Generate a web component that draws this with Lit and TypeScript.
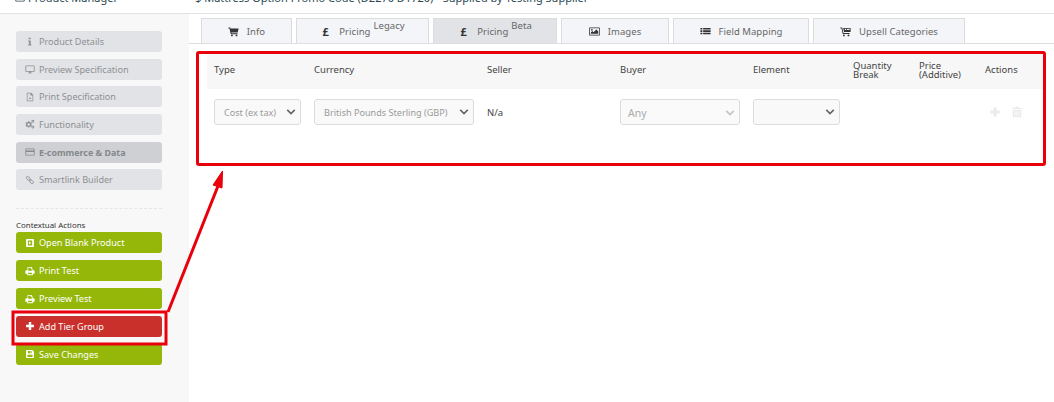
import { LitElement, html, css, svg } from "lit";
import { customElement } from "lit/decorators.js";

const ICONS: Record<string, any> = {
  info: svg`<path d="M5 1h3v2.2H5zM4.500 5H8v5.400h1V12H4.500v-1.600h1V6.600h-1z"/>`,
  monitor: svg`<path fill-rule="evenodd" d="M1.500 2h11a1 1 0 0 1 1 1v7a1 1 0 0 1-1 1H8.300v1.200H10V13H4v-.8h1.700V11H1.500a1 1 0 0 1-1-1V3a1 1 0 0 1 1-1zM1.700 3.200v6.600h10.600V3.200z"/>`,
  pdf: svg`<path fill-rule="evenodd" d="M2.500 1H8.500L11.500 4V13H2.500zM3.500 2V12H10.500V5H7.500V2zM5 10.500C6 9.500 7 7.500 6.700 6.200 7.300 7.700 8 8.700 9.300 9.300 7.800 9.200 6.500 9.600 5 10.500z"/>`,
  cogs: svg`<path fill-rule="evenodd" d="M4.200 3.200h2l.3 1.100 1.100.6 1-.4 1 1.700-.8.800v1.200l.8.800-1 1.700-1-.4-1.100.6-.3 1.100h-2L3.900 11l-1.100-.6-1 .4-1-1.700.8-.8V7.100l-.8-.8 1-1.700 1 .4 1.100-.6zM5.200 6a1.700 1.700 0 1 0 0 3.400 1.700 1.700 0 0 0 0-3.400zM11 1l.8.500.7-.2.500.8-.4.600v.9l.4.600-.5.8-.7-.2-.8.500-.8-.5-.7.200-.5-.8.400-.6V2.700l-.4-.6.500-.8.700.2zM11 2.300a.8.800 0 1 0 0 1.600.8.800 0 0 0 0-1.600zM11 9l.8.500.7-.2.500.8-.4.600v.9l.4.600-.5.8-.7-.2-.8.500-.8-.5-.7.200-.5-.8.400-.6v-.9l-.4-.6.500-.8.700.2zM11 10.300a.8.800 0 1 0 0 1.600.8.800 0 0 0 0-1.600z"/>`,
  card: svg`<path fill-rule="evenodd" d="M1.500 2h11a1 1 0 0 1 1 1v8a1 1 0 0 1-1 1h-11a1 1 0 0 1-1-1V3a1 1 0 0 1 1-1zM1.700 3.200V4.800h10.600V3.200zM1.700 7v3.800h10.600V7z"/>`,
  link: svg`<path fill="none" stroke="currentColor" stroke-width="1.400" d="M2 3.200a1.800 1.800 0 0 1 3-.6l2 2a1.800 1.800 0 0 1-2.500 2.500L2.500 5.100A1.800 1.800 0 0 1 2 3.200zM7 7.300a1.800 1.800 0 0 1 2.500 0l2 2a1.800 1.800 0 0 1-2.500 2.500l-2-2a1.800 1.800 0 0 1 0-2.500z"/>`,
  play: svg`<path fill-rule="evenodd" d="M2.500 1.500h9a1 1 0 0 1 1 1v9a1 1 0 0 1-1 1h-9a1 1 0 0 1-1-1v-9a1 1 0 0 1 1-1zM4 3.500v7h6v-7zM5.500 4.800 9 7 5.500 9.200z"/>`,
  print: svg`<path fill-rule="evenodd" d="M3.500 1.500h5.500l1.500 1.500V6H12a1.500 1.500 0 0 1 1.500 1.500V11h-2.500v1.800H3V11H.5V7.500A1.500 1.500 0 0 1 2 6h1.500zM4.500 2.500V6.500h5V4H8V2.500zM4.300 9.500v2.200h5.400V9.500z"/>`,
  plus: svg`<path d="M5.300 1.500h3.400v3.800h3.800v3.400H8.700v3.800H5.300V8.700H1.500V5.300h3.800z"/>`,
  save: svg`<path fill-rule="evenodd" d="M2 1.500h8.500l2 2V12a.5.500 0 0 1-.5.500H2a.5.500 0 0 1-.5-.5V2a.5.500 0 0 1 .5-.5zM4 2.700v3.300h5.500V2.700zM3.500 8v3.300h7V8zM7.500 3.200h1.200v2.200H7.500z"/>`,
  cart: svg`<path d="M.5 2h2.300l.3 1.200h10.400l-1.200 5H4.300l.2 1h7.700v1.200H3.500L1.900 3.200H.5z"/><circle cx="5" cy="12" r="1.200"/><circle cx="10.800" cy="12" r="1.200"/>`,
  upsell: svg`<path d="M.5 2h2.300l1.700 7h7.700v1.200H3.500L1.900 3.200H.5z"/><circle cx="5" cy="12" r="1.200"/><circle cx="10.800" cy="12" r="1.200"/><path fill-rule="evenodd" d="M4 2.500h9.500v5H5.200zM6 3.500l.3 1.500H8V3.500zM9 3.500V5h3.300V3.500z"/>`,
  image: svg`<path fill-rule="evenodd" d="M1 2h12a.7.700 0 0 1 .7.700v8.600a.7.700 0 0 1-.7.700H1a.7.700 0 0 1-.7-.7V2.700A.7.700 0 0 1 1 2zM1.300 3v8h11.400V3zM2.300 10V8.300l2-2 1.500 1.500 3.500-3.500 2.400 2.400V10zM3.700 3.800a1.100 1.100 0 1 1 0 2.200 1.100 1.100 0 0 1 0-2.200z"/>`,
  list: svg`<path d="M.5 2.500h2.500v2H.5zM4 2.500h9.500v2H4zM.5 5.500h2.500v2H.5zM4 5.500h9.500v2H4zM.5 8.500h2.500v2H.5zM4 8.500h9.500v2H4z"/>`,
  trash: svg`<path fill-rule="evenodd" d="M5 1h4l.7 1.300H13v1.200H1V2.300h3.300zM2 4.500h10V13H2zM4 6v5.500h1V6zM6.500 6v5.500h1V6zM9 6v5.500h1V6z"/>`,
};

const icon = (name: string) =>
  html`<svg class="ico" viewBox="0 0 14 14" fill="currentColor" aria-hidden="true">${ICONS[name]}</svg>`;

const chevron = html`<svg class="chev" viewBox="0 0 12 8" aria-hidden="true"><path d="M1.500 1.500 6 6l4.500-4.500" fill="none" stroke="currentColor" stroke-width="2"/></svg>`;

const NAV = [
  ["info", "Product Details"],
  ["monitor", "Preview Specification"],
  ["pdf", "Print Specification"],
  ["cogs", "Functionality"],
  ["card", "E-commerce & Data"],
  ["link", "Smartlink Builder"],
];
const ACTIONS = [
  ["play", "Open Blank Product", ""],
  ["print", "Print Test", ""],
  ["print", "Preview Test", ""],
  ["plus", "Add Tier Group", "red"],
  ["save", "Save Changes", ""],
];
const TABS: [string, string, string, number][] = [
  ["cart", "Info", "", 91],
  ["£", "Pricing", "Legacy", 133],
  ["£", "Pricing", "Beta", 124],
  ["image", "Images", "", 108],
  ["list", "Field Mapping", "", 136],
  ["upsell", "Upsell Categories", "", 152],
];

@customElement("app-root")
export class AppRoot extends LitElement {
  static styles = css`
    :host {
      display: block;
      position: relative;
      width: 1054px;
      height: 402px;
      overflow: hidden;
      background: #fff;
      font-family: "Noto Sans", "Open Sans", sans-serif;
      font-size: 9.5px;
      color: #444;
    }
    .ico { width: 11px; height: 11px; flex: none; display: block; }
    .top {
      border-bottom: 1px solid #e3e3e3;
      display: flex;
      align-items: flex-end;
      overflow: hidden;
      padding-bottom: 9px;
      height: 4px;
      font-size: 11px;
      line-height: 13px;
      color: #2c4a52;
    }
    .top .a { display: flex; align-items: center; gap: 3px; padding-left: 15px; width: 180px; flex: none; }
    .top .a .ico { width: 10px; height: 10px; }
    .layout { display: flex; height: 388px; }
    .side {
      width: 189px;
      flex: none;
      background: #f8f8f8;
      padding: 17px 27px 0 16px;
      box-sizing: border-box;
    }
    .nav { display: flex; flex-direction: column; gap: 6.67px; }
    .btn {
      height: 21px;
      width: 146px;
      border-radius: 3px;
      display: flex;
      align-items: center;
      padding-left: 9px;
      gap: 4px;
      box-sizing: border-box;
      font-size: 9.100px;
      white-space: nowrap;
    }
    .btn .ico { width: 10px; height: 10px; }
    .nav .btn { background: #e2e3e6; color: #8d9094; }
    .nav .btn.on { background: #cfd0d3; font-weight: 700; color: #85888c; font-size: 8.900px; }
    .dash { border-top: 1px dashed #e6e6e6; margin-top: 18px; }
    .ctx { font-size: 7.900px; color: #333; line-height: 11px; margin-top: 11px; margin-bottom: 1px; }
    .acts { display: flex; flex-direction: column; gap: 6.900px; }
    .acts .btn { background: #95b70a; color: #fff; }
    .acts .btn.red { background: #c9302c; }
    .main { flex: 1; min-width: 0; display: flex; flex-direction: column; }
    .tabs {
      display: flex;
      height: 30px;
      box-sizing: border-box;
      padding: 4px 0 0 12px;
      gap: 4px;
      border-bottom: 1px solid #dedede;
    }
    .tab {
      background: #f4f5f9;
      border: 1px solid #dcdcdc;
      border-bottom: 0;
      display: flex;
      align-items: center;
      justify-content: center;
      gap: 8px;
      box-sizing: border-box;
      letter-spacing: 0.05px;
      color: #666;
      white-space: nowrap;
    }
    .tab.on { background: #e1e3e6; }
    .tab .ico { color: #333; }
    .pound { font-weight: 700; color: #333; font-size: 11px; width: 11px; text-align: center; }
    .lbl { display: flex; align-items: flex-start; gap: 3px; }
    .sup { position: relative; top: -6px; }
    .table { margin: 8px 11px 0 18px; }
    .head, .row { display: grid; grid-template-columns: 100px 173px 133px 133px 100px 66px 66px 1fr; }
    .head { background: #f7f7f7; height: 37px; align-items: center; padding-bottom: 2px; box-sizing: border-box; color: #444; }
    .head div { padding-left: 7px; line-height: 9px; }
    .row { padding-top: 10px; align-items: center; height: 26px; }
    .row > div { padding-left: 7px; }
    .sel {
      height: 26px;
      border: 1px solid #dcdcdc;
      border-radius: 3px;
      background: #f9f9f9;
      display: flex;
      align-items: center;
      padding-left: 9px;
      box-sizing: border-box;
      color: #9a9a9a;
      font-size: 9.100px;
      overflow: hidden;
      white-space: nowrap;
    }
    .sel span { overflow: hidden; flex: 1; min-width: 0; }
    .chev { width: 10px; height: 8px; flex: none; margin: 0 4px 0 8px; color: #666; }
    .sel.any { background: #fafafa; color: #aaa; font-size: 10.500px; padding: 1px 0 0 7px; }
    .sel.any .chev { color: #c4c4c4; }
    .w87 { width: 87px; }
    .w160 { width: 160px; }
    .w120 { width: 120px; }
    .actions { display: flex; gap: 10px; color: #ebebeb; padding-left: 11px !important; }
    .actions .ico { width: 12px; height: 12px; }
    .marks { position: absolute; inset: 0; pointer-events: none; }
  `;

  render() {
    return html`
      <div class="top">
        <div class="a">${icon("card")}Product Manager</div>
        <div>$ Mattress Option Promo Code (D2270 D1720) - Supplied by Testing Supplier</div>
      </div>
      <div class="layout">
        <aside class="side">
          <div class="nav">
            ${NAV.map(([i, t], n) => html`<div class="btn ${n === 4 ? "on" : ""}">${icon(i)}${t}</div>`)}
          </div>
          <div class="dash"></div>
          <div class="ctx">Contextual Actions</div>
          <div class="acts">
            ${ACTIONS.map(([i, t, c]) => html`<div class="btn ${c}">${icon(i)}${t}</div>`)}
          </div>
        </aside>
        <main class="main">
          <div class="tabs">
            ${TABS.map(([i, t, s, w], n) => html`
              <div class="tab ${n === 2 ? "on" : ""}" style="width:${w}px">
                ${i === "£" ? html`<span class="pound">£</span>` : icon(i)}
                <span class="lbl"><span>${t}</span>${s ? html`<span class="sup">${s}</span>` : ""}</span>
              </div>`)}
          </div>
          <div class="table">
            <div class="head">
              <div>Type</div><div>Currency</div><div>Seller</div><div>Buyer</div><div>Element</div>
              <div>Quantity<br />Break</div><div>Price<br />(Additive)</div><div>Actions</div>
            </div>
            <div class="row">
              <div><div class="sel w87"><span>Cost (ex tax)</span>${chevron}</div></div>
              <div><div class="sel w160"><span>British Pounds Sterling (GBP)</span>${chevron}</div></div>
              <div>N/a</div>
              <div><div class="sel any w120"><span>Any</span>${chevron}</div></div>
              <div><div class="sel w87"><span></span>${chevron}</div></div>
              <div></div><div></div>
              <div class="actions">${icon("plus")}${icon("trash")}</div>
            </div>
          </div>
        </main>
      </div>
      <svg class="marks" viewBox="0 0 1054 402" width="1054" height="402" aria-hidden="true">
        <g fill="none" stroke="#e8000b" stroke-width="3">
          <rect x="197.500" y="52.500" width="847" height="112" rx="1.500"/>
          <rect x="13" y="312" width="153" height="32"/>
          <path d="M168 312 218 186" />
        </g>
        <path d="M222.500 171 213 185 222 188z" fill="#e8000b" stroke="#e8000b"/>
      </svg>
    `;
  }
}
